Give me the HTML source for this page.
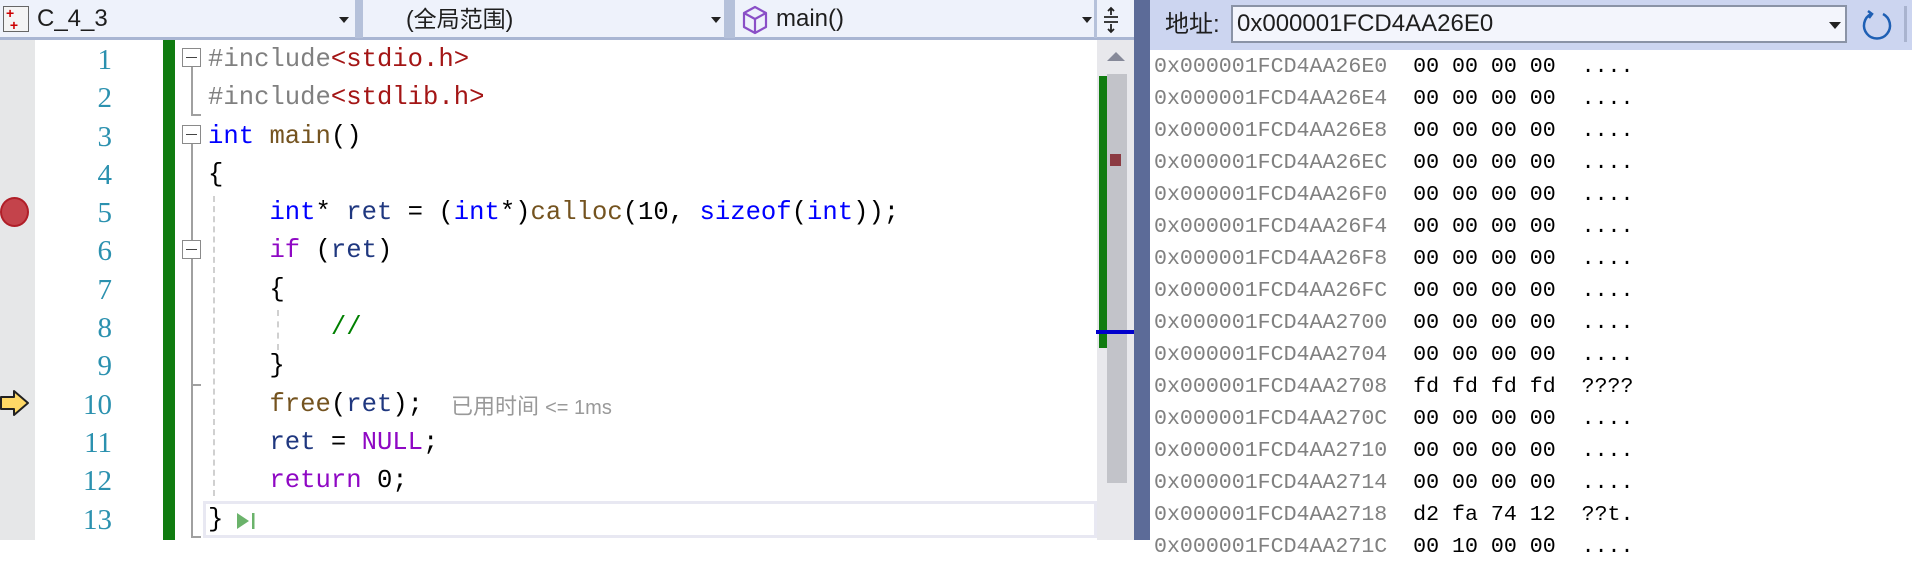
<!DOCTYPE html>
<html><head><meta charset="utf-8"><style>
*{margin:0;padding:0;box-sizing:border-box}
body{width:1912px;height:540px;overflow:hidden;background:#fff;position:relative;font-family:"Liberation Sans","Noto Sans CJK SC",sans-serif}
.a{position:absolute}
.tb{position:absolute;top:0;height:38px;line-height:38px;font-size:23px;color:#1e1e1e;white-space:nowrap}
.code{position:absolute;left:208px;font-family:"Liberation Mono","Noto Sans CJK SC",monospace;font-size:25.6px;line-height:38.3px;white-space:pre;color:#000}
.ln{position:absolute;left:40px;width:72px;text-align:right;font-family:"Liberation Serif",serif;font-size:29px;line-height:38.3px;color:#2b91af}
.kw{color:#0000ff}.fn{color:#74531f}.v{color:#1f377f}.p{color:#8f08c4}.pp{color:#808080}.s{color:#a31515}.c{color:#008000}
.mem{position:absolute;left:1154px;font-family:"Liberation Mono",monospace;font-size:21.6px;line-height:32px;white-space:pre;color:#000}
.mem .ad{color:#808080}
.fold{position:absolute;left:182px;width:19px;height:19px;border:1.5px solid #8a8a8a;background:#fff}
.fold:after{content:"";position:absolute;left:3px;right:3px;top:7.5px;height:1.5px;background:#444}
</style></head><body>
<div class="a" style="left:0;top:0;width:1134px;height:40px;background:#eef2fb;border-bottom:3px solid #a9b6d3"></div>
<div class="a" style="left:355px;top:0;width:8px;height:38px;background:#b5c1da"></div>
<div class="a" style="left:724px;top:0;width:11px;height:38px;background:#b5c1da"></div>
<div class="a" style="left:1094px;top:0;width:3px;height:38px;background:#b5c1da"></div>
<div class="a" style="left:3px;top:6px;width:26px;height:26px;border:1.5px solid #666;background:#f4f4f4;color:#c00;font-size:14px;font-weight:bold;line-height:12px;padding-left:2px">+<br>&nbsp;+</div>
<div class="tb" style="left:37px;font-size:24px">C_4_3</div>
<div class="a" style="left:339px;top:17px;border-left:5px solid transparent;border-right:5px solid transparent;border-top:6px solid #222"></div>
<div class="tb" style="left:406px">(全局范围)</div>
<div class="a" style="left:711px;top:17px;border-left:5px solid transparent;border-right:5px solid transparent;border-top:6px solid #222"></div>
<svg class="a" style="left:742px;top:5px" width="26" height="30" viewBox="0 0 26 30"><path d="M13 2 L24 8 L24 22 L13 28 L2 22 L2 8 Z M2 8 L13 14 L24 8 M13 14 L13 28" fill="none" stroke="#8a4fc7" stroke-width="2.2" stroke-linejoin="round"/></svg>
<div class="tb" style="left:776px;font-size:24px">main()</div>
<div class="a" style="left:1082px;top:17px;border-left:5px solid transparent;border-right:5px solid transparent;border-top:6px solid #222"></div>
<svg class="a" style="left:1103px;top:6px" width="16" height="28" viewBox="0 0 16 28"><path d="M1 11H15M1 16H15M8 2V9M5 5L8 2L11 5M8 18V26M5 23L8 26L11 23" fill="none" stroke="#222" stroke-width="1.8"/></svg>
<div class="a" style="left:0;top:40px;width:35px;height:500px;background:#e6e7e8"></div>
<div class="ln" style="top:41px">1<br>2<br>3<br>4<br>5<br>6<br>7<br>8<br>9<br>10<br>11<br>12<br>13</div>
<div class="a" style="left:163px;top:40px;width:12px;height:500px;background:#107c10"></div>
<div class="a" style="left:0;top:197px;width:29px;height:30px;border-radius:50%;background:#c4434b;border:2px solid #b01e28"></div>
<svg class="a" style="left:0;top:389px" width="30" height="28" viewBox="0 0 30 28"><path d="M1 8H14V2L28 14L14 26V20H1Z" fill="#ffd966" stroke="#222" stroke-width="2" stroke-linejoin="round"/></svg>
<div class="fold" style="top:48px"></div>
<div class="a" style="left:191px;top:67px;width:1.5px;height:48px;background:#a0a0a0"></div>
<div class="a" style="left:191px;top:114px;width:10px;height:1.5px;background:#a0a0a0"></div>
<div class="fold" style="top:125px"></div>
<div class="a" style="left:191px;top:144px;width:1.5px;height:393px;background:#a0a0a0"></div>
<div class="a" style="left:191px;top:536px;width:10px;height:1.5px;background:#a0a0a0"></div>
<div class="fold" style="top:240px"></div>
<div class="a" style="left:191px;top:384px;width:10px;height:1.5px;background:#a0a0a0"></div>
<div class="a" style="left:213px;top:196px;width:0;height:300px;border-left:2px dashed #d0d0d0"></div>
<div class="a" style="left:277px;top:310px;width:0;height:40px;border-left:2px dashed #d0d0d0"></div>
<div class="a" style="left:203px;top:501px;width:894px;height:37px;border:3px solid #e8e8f2"></div>
<div class="code" style="top:41px"><span class="pp">#include</span><span class="s">&lt;stdio.h&gt;</span>
<span class="pp">#include</span><span class="s">&lt;stdlib.h&gt;</span>
<span class="kw">int</span> <span class="fn">main</span>()
{
    <span class="kw">int</span>* <span class="v">ret</span> = (<span class="kw">int</span>*)<span class="fn">calloc</span>(10, <span class="kw">sizeof</span>(<span class="kw">int</span>));
    <span class="p">if</span> (<span class="v">ret</span>)
    {
        <span class="c">//</span>
    }
    <span class="fn">free</span>(<span class="v">ret</span>);
    <span class="v">ret</span> = <span class="p">NULL</span>;
    <span class="p">return</span> 0;
}</div>
<div class="a" style="left:451px;top:389px;font-size:22px;color:#999;white-space:nowrap">已用时间 <span style="font-size:20px">&lt;= 1ms</span></div>
<svg class="a" style="left:236px;top:511px" width="22" height="20"><path d="M1 2L13 10L1 18Z" fill="#6bb36b"/><rect x="16" y="2" width="2.5" height="16" fill="#6bb36b"/></svg>
<div class="a" style="left:1097px;top:40px;width:37px;height:500px;background:#e8e8ec"></div>
<div class="a" style="left:1107px;top:52px;border-left:9px solid transparent;border-right:9px solid transparent;border-bottom:9px solid #868999"></div>
<div class="a" style="left:1107px;top:74px;width:20px;height:409px;background:#c2c3c9"></div>
<div class="a" style="left:1099px;top:76px;width:8px;height:272px;background:#107c10"></div>
<div class="a" style="left:1110px;top:154px;width:11px;height:12px;background:#8b3a42"></div>
<div class="a" style="left:1096px;top:330px;width:38px;height:4px;background:#0000cc"></div>
<div class="a" style="left:1134px;top:0;width:16px;height:540px;background:#5c6b98"></div>
<div class="a" style="left:1150px;top:0;width:762px;height:50px;background:#ccd5f0"></div>
<div class="tb" style="left:1165px;top:6px;font-size:24px">地址:</div>
<div class="a" style="left:1231px;top:5px;width:616px;height:38px;background:#f3f5fc;border:2px solid #8a93a6"></div>
<div class="tb" style="left:1237px;top:5px;font-size:24px">0x000001FCD4AA26E0</div>
<div class="a" style="left:1829px;top:22px;border-left:6px solid transparent;border-right:6px solid transparent;border-top:7px solid #222"></div>
<svg class="a" style="left:1860px;top:8px" width="34" height="34" viewBox="0 0 34 34"><path d="M11 6A13 13 0 1 0 23 6" fill="none" stroke="#1e5fb4" stroke-width="2.5"/><path d="M8 3L12 6L9 10" fill="none" stroke="#1e5fb4" stroke-width="2.5"/></svg>
<div class="a" style="left:1904px;top:6px;width:3px;height:36px;background:#a9b3ce"></div>
<div class="mem" style="top:51px"><span class="ad">0x000001FCD4AA26E0</span>  00 00 00 00  ....
<span class="ad">0x000001FCD4AA26E4</span>  00 00 00 00  ....
<span class="ad">0x000001FCD4AA26E8</span>  00 00 00 00  ....
<span class="ad">0x000001FCD4AA26EC</span>  00 00 00 00  ....
<span class="ad">0x000001FCD4AA26F0</span>  00 00 00 00  ....
<span class="ad">0x000001FCD4AA26F4</span>  00 00 00 00  ....
<span class="ad">0x000001FCD4AA26F8</span>  00 00 00 00  ....
<span class="ad">0x000001FCD4AA26FC</span>  00 00 00 00  ....
<span class="ad">0x000001FCD4AA2700</span>  00 00 00 00  ....
<span class="ad">0x000001FCD4AA2704</span>  00 00 00 00  ....
<span class="ad">0x000001FCD4AA2708</span>  fd fd fd fd  ????
<span class="ad">0x000001FCD4AA270C</span>  00 00 00 00  ....
<span class="ad">0x000001FCD4AA2710</span>  00 00 00 00  ....
<span class="ad">0x000001FCD4AA2714</span>  00 00 00 00  ....
<span class="ad">0x000001FCD4AA2718</span>  d2 fa 74 12  ??t.
<span class="ad">0x000001FCD4AA271C</span>  00 10 00 00  ....</div>
</body></html>
